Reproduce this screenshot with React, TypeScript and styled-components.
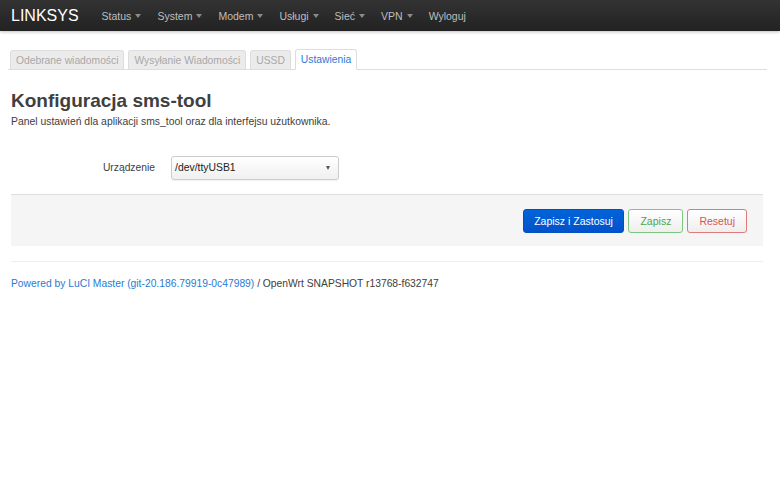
import React from "react";
import styled, { createGlobalStyle } from "styled-components";

const Global = createGlobalStyle`
  html, body { margin: 0; padding: 0; background: #fff; }
  body { font-family: "Liberation Sans", Arial, Helvetica, sans-serif; font-size: 10.3px; line-height: 18px; color: #404040; }
  * { box-sizing: border-box; }
`;

const Navbar = styled.div`
  height: 31px;
  background: linear-gradient(to bottom, #333333, #222222);
  box-shadow: 0 1px 3px rgba(0,0,0,0.25);
  display: flex;
  align-items: center;
  padding-left: 11px;
`;

const Brand = styled.a`
  color: #ffffff;
  font-size: 16px;
  font-weight: normal;
  margin-right: 23px;
  text-decoration: none;
`;

const NavItem = styled.a`
  color: #bfbfbf;
  font-size: 10.5px;
  text-decoration: none;
  margin-right: 16px;
  display: flex;
  align-items: center;
`;

const Caret = styled.span`
  display: inline-block;
  width: 0;
  height: 0;
  margin-left: 4px;
  margin-top: 1px;
  border-left: 3.5px solid transparent;
  border-right: 3.5px solid transparent;
  border-top: 4px solid #8a8a8a;
`;

const Container = styled.div`
  margin: 0 13px 0 8px;
`;

const Tabs = styled.ul`
  list-style: none;
  margin: 18px 0 0 0;
  padding: 0 0 0 2px;
  display: flex;
  gap: 4px;
  border-bottom: 1px solid #ddd;
  align-items: flex-end;
  height: 21px;
`;

const Tab = styled.li<{ $active?: boolean }>`
  height: ${(p) => (p.$active ? "21px" : "19px")};
  margin-bottom: ${(p) => (p.$active ? "-1px" : "0")};
  padding: 0 5px;
  font-size: 10.3px;
  line-height: ${(p) => (p.$active ? "20px" : "19px")};
  border: 1px solid #dddddd;
  border-bottom: ${(p) => (p.$active ? "1px solid #fff" : "none")};
  border-radius: 3px 3px 0 0;
  background: ${(p) => (p.$active ? "#fff" : "#ebebeb")};
  color: ${(p) => (p.$active ? "#2a7ad4" : "#a8a8a8")};
`;

const Content = styled.div`
  padding: 0 4px 0 3px;
`;

const Title = styled.h2`
  margin: 19px 0 0 0;
  font-size: 19px;
  line-height: 24px;
  font-weight: bold;
  color: #404040;
`;

const Desc = styled.div`
  font-size: 10.4px;
  line-height: 16px;
  color: #404040;
  margin-top: 1px;
`;

const FormRow = styled.div`
  display: flex;
  align-items: center;
  margin-top: 26px;
  height: 24px;
`;

const Label = styled.label`
  width: 144px;
  text-align: right;
  font-size: 10.3px;
  color: #404040;
`;

const Select = styled.div`
  margin-left: 16px;
  width: 168px;
  height: 24px;
  border: 1px solid #cccccc;
  border-radius: 3px;
  background: linear-gradient(to bottom, #ffffff, #f0f0f0);
  box-shadow: 0 1px 1px rgba(0,0,0,0.06);
  display: flex;
  align-items: center;
  justify-content: space-between;
  padding: 0 8px 0 3px;
  font-size: 10.4px;
  color: #222;
`;

const SelArrow = styled.span`
  width: 0;
  height: 0;
  border-left: 2.5px solid transparent;
  border-right: 2.5px solid transparent;
  border-top: 4px solid #555;
`;

const Actions = styled.div`
  margin-top: 14px;
  height: 52px;
  background: #f5f5f5;
  border-top: 1px solid #dddddd;
  display: flex;
  align-items: center;
  justify-content: flex-end;
  gap: 4px;
  padding-right: 16px;
`;

const Btn = styled.button<{ $kind: "apply" | "save" | "reset" }>`
  font-family: "Liberation Sans", Arial, sans-serif;
  font-size: 10.5px;
  height: 24px;
  padding: 0 ${(p) => (p.$kind === "apply" ? "10.5px" : "11px")};
  border-radius: 3px;
  cursor: pointer;
  border: 1px solid
    ${(p) => (p.$kind === "apply" ? "#0050c0" : p.$kind === "save" ? "#7cc87c" : "#e07a7a")};
  color: ${(p) => (p.$kind === "apply" ? "#fff" : p.$kind === "save" ? "#4aa84a" : "#d9534f")};
  background: ${(p) =>
    p.$kind === "apply"
      ? "linear-gradient(to bottom, #0064d8, #0052cc)"
      : "linear-gradient(to bottom, #ffffff, #eeeeee)"};
`;

const Hr = styled.div`
  margin-top: 15px;
  border-top: 1px solid #eeeeee;
`;

const Footer = styled.div`
  margin-top: 13px;
  font-size: 10.3px;
  color: #404040;
`;

const Link = styled.a`
  color: #2a7ad4;
  text-decoration: none;
`;

const menu = ["Status", "System", "Modem", "Usługi", "Sieć", "VPN"];

export default function App() {
  return (
    <>
      <Global />
      <Navbar>
        <Brand>LINKSYS</Brand>
        {menu.map((m) => (
          <NavItem key={m}>
            {m}
            <Caret />
          </NavItem>
        ))}
        <NavItem>Wyloguj</NavItem>
      </Navbar>
      <Container>
        <Tabs>
          <Tab>Odebrane wiadomości</Tab>
          <Tab>Wysyłanie Wiadomości</Tab>
          <Tab>USSD</Tab>
          <Tab $active>Ustawienia</Tab>
        </Tabs>
        <Content>
          <Title>Konfiguracja sms-tool</Title>
          <Desc>Panel ustawień dla aplikacji sms_tool oraz dla interfejsu użutkownika.</Desc>
          <FormRow>
            <Label>Urządzenie</Label>
            <Select>
              /dev/ttyUSB1
              <SelArrow />
            </Select>
          </FormRow>
          <Actions>
            <Btn $kind="apply">Zapisz i Zastosuj</Btn>
            <Btn $kind="save">Zapisz</Btn>
            <Btn $kind="reset">Resetuj</Btn>
          </Actions>
          <Hr />
          <Footer>
            <Link>Powered by LuCI Master (git-20.186.79919-0c47989)</Link> / OpenWrt SNAPSHOT r13768-f632747
          </Footer>
        </Content>
      </Container>
    </>
  );
}
